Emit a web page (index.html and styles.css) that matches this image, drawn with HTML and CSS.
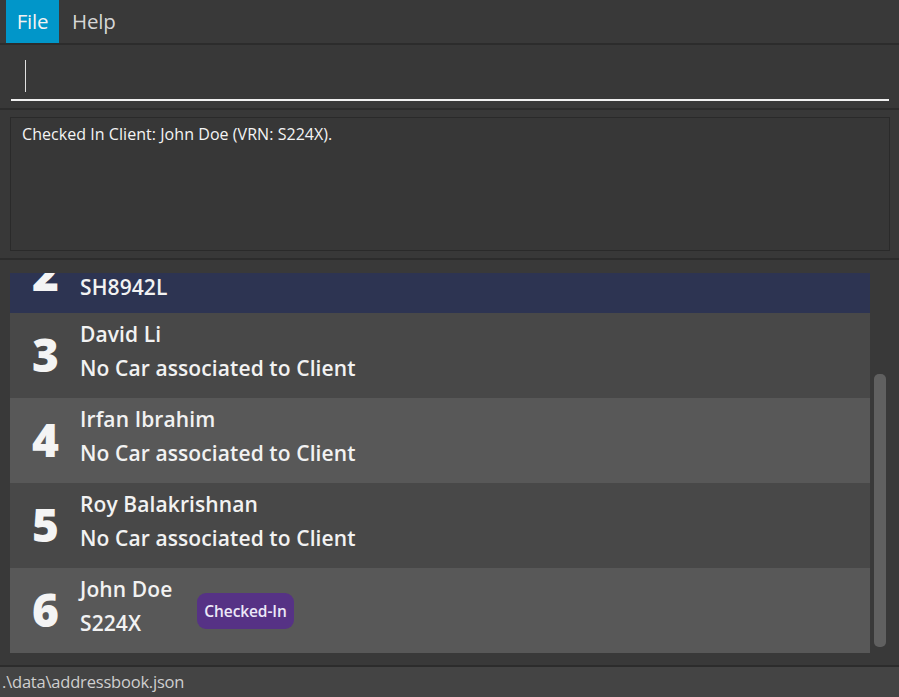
FILE: index.html
```html
<!DOCTYPE html>
<html>
<head>
<meta charset="utf-8">
<link rel="stylesheet" href="styles.css">
</head>
<body>
<div class="app">
  <div class="menubar">
    <div class="menu-item active">File</div>
    <div class="menu-item">Help</div>
  </div>
  <div class="command">
    <div class="command-field"><span class="caret"></span></div>
  </div>
  <div class="result-pane">
    <div class="result-box">Checked In Client: John Doe (VRN: S224X).</div>
  </div>
  <div class="list-pane">
    <div class="list-view">
      <div class="list-inner">
        <div class="card selected">
          <div class="idx">2</div>
          <div class="info"><div class="name">Ben Tan</div><div class="car">SH8942L</div></div>
        </div>
        <div class="card odd">
          <div class="idx">3</div>
          <div class="info"><div class="name">David Li</div><div class="car">No Car associated to Client</div></div>
        </div>
        <div class="card even">
          <div class="idx">4</div>
          <div class="info"><div class="name">Irfan Ibrahim</div><div class="car">No Car associated to Client</div></div>
        </div>
        <div class="card odd">
          <div class="idx">5</div>
          <div class="info"><div class="name">Roy Balakrishnan</div><div class="car">No Car associated to Client</div></div>
        </div>
        <div class="card even">
          <div class="idx">6</div>
          <div class="info"><div class="name">John Doe</div><div class="car">S224X</div></div>
          <div class="badge">Checked-In</div>
        </div>
      </div>
    </div>
    <div class="scroll-track"><div class="scroll-thumb"></div></div>
  </div>
  <div class="status">.\data\addressbook.json</div>
</div>
</body>
</html>
```
FILE: styles.css
```css
html, body {
  margin: 0;
  padding: 0;
  background: #383838;
  font-family: "Open Sans", "Noto Sans", sans-serif;
}
.app {
  width: 899px;
  height: 697px;
  display: flex;
  flex-direction: column;
  overflow: hidden;
}
.menubar {
  height: 43px;
  background: #393939;
  display: flex;
  padding-left: 6px;
  border-bottom: 2px solid #2c2c2c;
}
.menu-item {
  height: 43px;
  line-height: 42px;
  padding: 0 12px 0 13px;
  font-size: 20.5px;
  color: #d6d6d6;
  letter-spacing: -0.2px;
}
.menu-item.active {
  background: #0196c9;
  color: #f2f2f2;
  width: 53px;
  padding: 0;
  text-align: center;
  box-sizing: border-box;
}
.command {
  height: 63px;
  background: #383838;
  padding: 0 10px 0 11px;
  border-bottom: 2px solid #2c2c2c;
}
.command-field {
  height: 54px;
  border-bottom: 2px solid #f0f0f0;
  position: relative;
}
.caret {
  position: absolute;
  left: 14px;
  top: 15px;
  width: 1px;
  height: 32px;
  background: #e0e0e0;
}
.result-pane {
  height: 150px;
  background: #383838;
  padding: 7px 9px 0 10px;
  box-sizing: border-box;
  border-bottom: 2px solid #2c2c2c;
}
.result-box {
  height: 134px;
  box-sizing: border-box;
  border: 1px solid #2a2a2a;
  background: #373737;
  color: #f4f4f4;
  font-size: 16px;
  padding: 5px 11px;
  letter-spacing: 0.05px;
}
.list-pane {
  height: 407px;
  background: #393939;
  display: flex;
  padding: 13px 0 12px 10px;
  box-sizing: border-box;
  border-bottom: 2px solid #2c2c2c;
}
.list-view {
  width: 860px;
  height: 380px;
  overflow: hidden;
  background: #383838;
}
.list-inner {
  margin-top: -45px;
}
.card {
  height: 85px;
  display: flex;
  align-items: center;
  color: #f2f2f2;
  box-sizing: border-box;
}
.card.selected { background: #2d3452; padding-top: 8px; }
.card.odd { background: #484848; }
.card.even { background: #585858; }
.idx {
  width: 48px;
  padding-left: 22px;
  font-size: 46px;
  font-weight: 800;
  line-height: 1;
  color: #f4f4f4;
  box-sizing: content-box;
  flex-shrink: 0;
  margin-top: -3px;
}
.info {
  display: flex;
  flex-direction: column;
  gap: 6px;
  padding-bottom: 10px;
}
.name, .car {
  font-size: 21px;
  font-weight: 600;
  line-height: 28px;
  letter-spacing: 0.1px;
  white-space: nowrap;
}
.badge {
  margin-left: 25px;
  height: 36px;
  line-height: 36px;
  padding: 0 7px;
  border-radius: 9px;
  background: #563285;
  color: #ece8f8;
  font-size: 15.5px;
  font-weight: 600;
  letter-spacing: -0.1px;
}
.scroll-track {
  width: 29px;
  position: relative;
}
.scroll-thumb {
  position: absolute;
  left: 4px;
  top: 101px;
  width: 12px;
  height: 273px;
  border-radius: 5px;
  background: #606060;
}
.status {
  flex: 1;
  background: #444444;
  color: #cfcfcf;
  font-size: 16.5px;
  line-height: 30px;
  padding-left: 2px;
  letter-spacing: -0.2px;
}
```
